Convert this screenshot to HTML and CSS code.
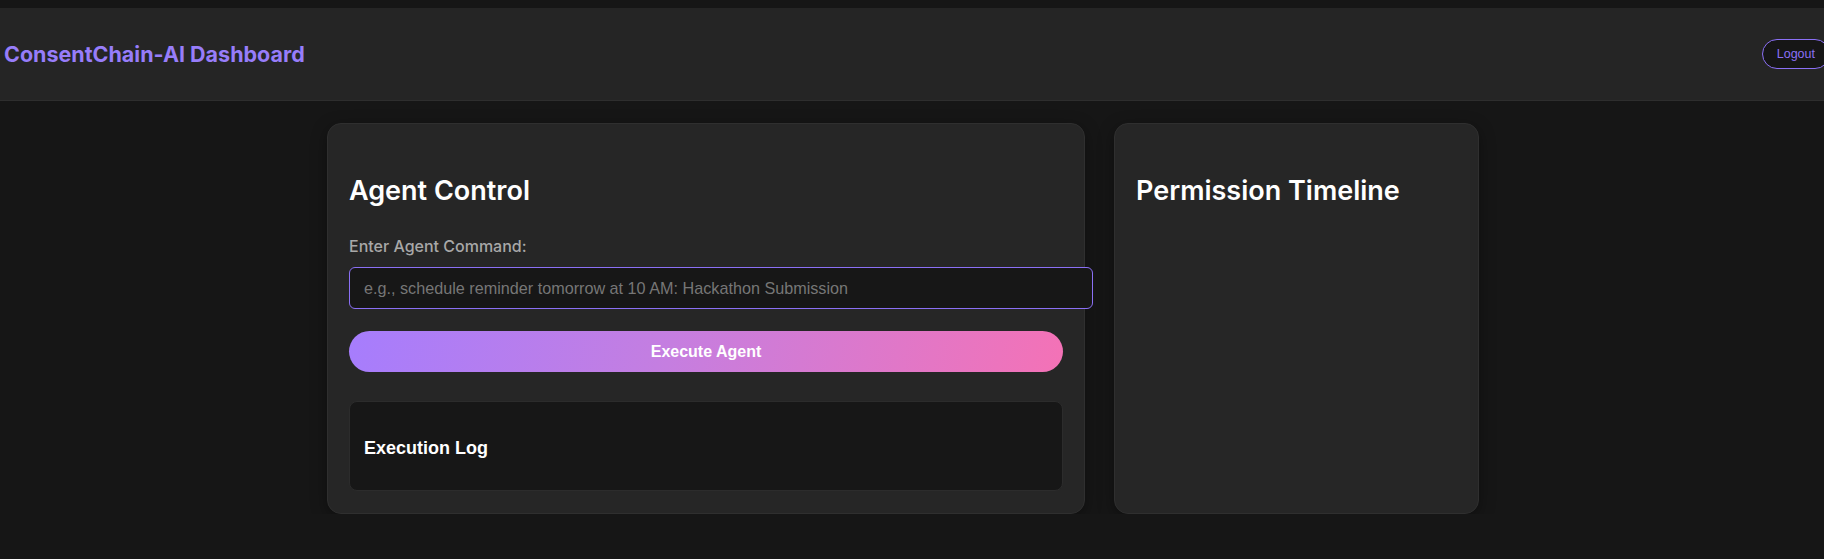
FILE: index.html
```html
<!DOCTYPE html>
<html lang="en">
<head>
<meta charset="utf-8">
<title>ConsentChain-AI Dashboard</title>
<link rel="stylesheet" href="styles.css">
</head>
<body>
<header class="topbar">
  <h1 class="brand">ConsentChain-AI Dashboard</h1>
  <button class="logout">Logout</button>
</header>
<main class="layout">
  <section class="card card-main">
    <h2 class="card-title">Agent Control</h2>
    <label class="field-label" for="cmd">Enter Agent Command:</label>
    <input id="cmd" class="cmd-input" type="text" placeholder="e.g., schedule reminder tomorrow at 10 AM: Hackathon Submission">
    <button class="exec-btn">Execute Agent</button>
    <div class="log-box">
      <h3 class="log-title">Execution Log</h3>
    </div>
  </section>
  <section class="card card-side">
    <h2 class="card-title">Permission Timeline</h2>
  </section>
</main>
</body>
</html>
```
FILE: styles.css
```css
* { box-sizing: content-box; }
html, body {
  margin: 0;
  background: #161616;
  overflow: hidden;
}
body {
  padding-top: 8px;
  border-top: 1px solid #2a2a2a;
  margin-top: -1px;
  font-family: Inter, "Liberation Sans", sans-serif;
  color: #fff;
}
.topbar {
  height: 92px;
  background: #252525;
  border-bottom: 1px solid #2e2e2e;
  display: flex;
  align-items: center;
  justify-content: space-between;
  padding-left: 4px;
}
.brand {
  margin: 0;
  font-size: 21.5px;
  font-weight: 700;
  color: #977dfa;
}
.logout {
  font-family: "Liberation Sans", Arial, sans-serif;
  font-size: 12.5px;
  color: #8b70f5;
  background: #161616;
  border: 1px solid #8b70f5;
  border-radius: 999px;
  height: 30px;
  padding: 0 14px;
  margin-right: -6px;
  box-sizing: border-box;
}
.layout {
  display: flex;
  justify-content: center;
  align-items: stretch;
  gap: 29px;
  padding: 22px 18px 0 0;
}
.card {
  background: #262626;
  border: 1px solid #2f2f2f;
  border-radius: 14px;
  box-shadow: 0 4px 16px rgba(0,0,0,0.35);
  padding: 21px 21px 21px 21px;
  height: 347px;
}
.card-main { width: 714px; }
.card-side { width: 321px; }
.card-title {
  margin: 30px 0 0;
  font-size: 27px;
  font-weight: 600;
  line-height: 32px;
}
.field-label {
  display: block;
  margin-top: 30px;
  font-size: 16px;
  font-weight: 500;
  color: #a8a8a8;
  line-height: 19px;
}
.cmd-input {
  display: block;
  width: 100%;
  margin-top: 11px;
  height: 40px;
  padding: 0 14px;
  border: 1px solid #8b70f5;
  border-radius: 6px;
  background: #171717;
  color: #ddd;
  font-family: "Liberation Sans", Arial, sans-serif;
  font-size: 16.2px;
  outline: none;
}
.cmd-input::placeholder { color: #767676; }
.exec-btn {
  display: block;
  width: 100%;
  margin-top: 22px;
  height: 41px;
  border: none;
  border-radius: 999px;
  background: linear-gradient(100deg, #a67dfd 0%, #c57ee0 45%, #f472b6 100%);
  color: #fff;
  font-family: "Liberation Sans", Arial, sans-serif;
  font-size: 16px;
  font-weight: 700;
  padding: 0;
}
.log-box {
  margin-top: 29px;
  height: 88px;
  background: #171717;
  border: 1px solid #2c2c2c;
  border-radius: 8px;
  padding: 0 14px;
  display: flex;
  align-items: center;
}
.log-title {
  margin: 0;
  font-family: "Liberation Sans", Arial, sans-serif;
  font-size: 18px;
  font-weight: 700;
  padding-top: 4px;
}
```
